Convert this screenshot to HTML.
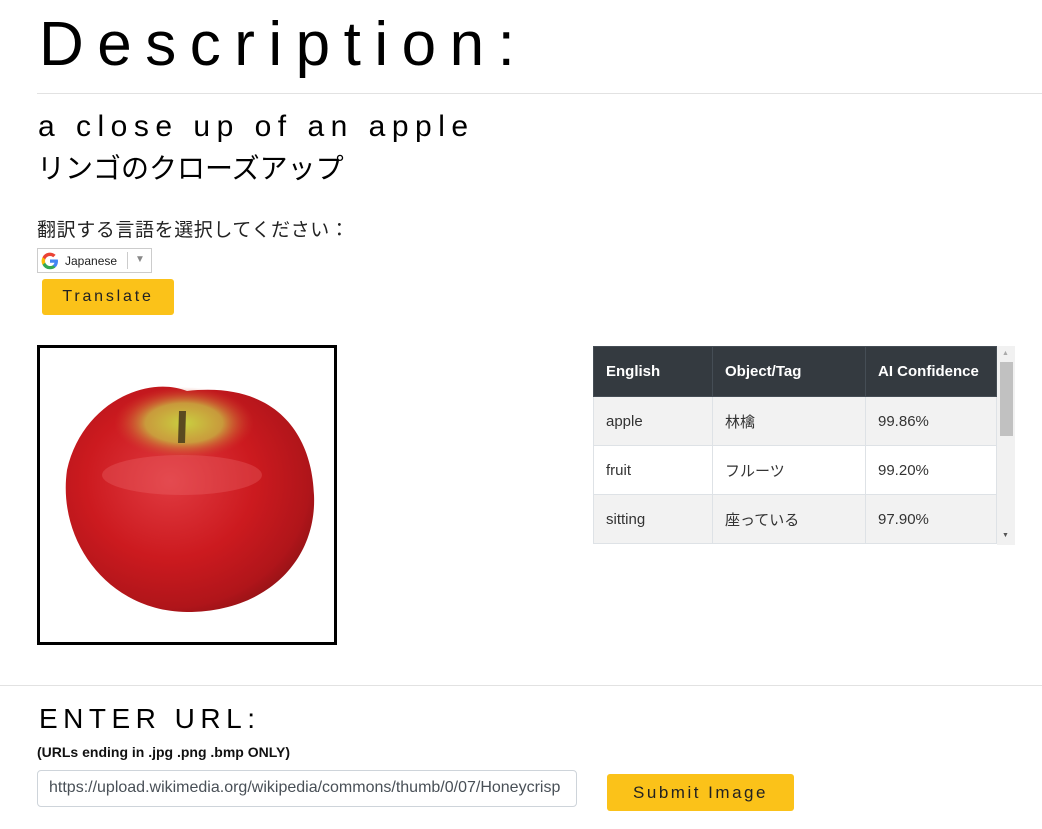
<!DOCTYPE html>
<html><head><meta charset="utf-8">
<style>
*{box-sizing:border-box;margin:0;padding:0}
body{width:1042px;height:829px;background:#fff;font-family:"Liberation Sans","Noto Sans CJK JP",sans-serif;color:#000;position:relative;overflow:hidden}
.abs{position:absolute}
h1{position:absolute;left:39px;top:6px;font-size:62px;font-weight:normal;letter-spacing:13.5px;line-height:78px;white-space:nowrap}
.hr{position:absolute;left:37px;right:0;height:1px;background:#e2e2e2}
.btn{position:absolute;background:#fbc219;border-radius:3px;color:#222;text-align:center;white-space:nowrap}
table{border-collapse:collapse;font-size:15px}
th{background:#343a40;color:#fff;text-align:left;font-weight:bold;height:50px;padding:0 12px;border:1px solid #454d55}
td{height:49px;padding:0 12px;border:1px solid #dee2e6;color:#333}
tr.g td{background:#f2f2f2}
</style></head><body>
<h1>Description:</h1>
<div class="hr" style="top:93px"></div>
<div class="abs" style="left:38px;top:110px;font-size:30px;letter-spacing:6.5px;white-space:nowrap">a close up of an apple</div>
<div class="abs" style="left:37px;top:147px;font-size:28px;white-space:nowrap">リンゴのクローズアップ</div>
<div class="abs" style="left:37px;top:215px;font-size:19px;letter-spacing:0.6px;color:#222;white-space:nowrap">翻訳する言語を選択してください：</div>
<div class="abs" style="left:37px;top:248px;width:115px;height:25px;border:1px solid #ccc;font-size:12px">
 <svg class="abs" style="left:3px;top:3px" width="18" height="18" viewBox="0 0 18 18">
  <path d="M17 9.2c0-.6-.1-1.2-.2-1.7H9v3.2h4.5a3.9 3.9 0 0 1-1.7 2.5v2.1h2.7c1.6-1.5 2.5-3.6 2.5-6.1z" fill="#4285F4"/>
  <path d="M9 17.3c2.3 0 4.2-.8 5.5-2l-2.7-2.1c-.7.5-1.700.8-2.8.8-2.2 0-4-1.5-4.7-3.4H1.5v2.2A8.3 8.3 0 0 0 9 17.3z" fill="#34A853"/>
  <path d="M4.3 10.6a5 5 0 0 1 0-3.2V5.2H1.5a8.3 8.3 0 0 0 0 7.6z" fill="#FBBC05"/>
  <path d="M9 4c1.2 0 2.3.4 3.2 1.3l2.4-2.4A8.3 8.3 0 0 0 1.5 5.2l2.8 2.2C5 5.5 6.8 4 9 4z" fill="#EA4335"/>
 </svg>
 <span class="abs" style="left:27px;top:5px;color:#222">Japanese</span>
 <span class="abs" style="left:89px;top:3px;width:1px;height:17px;background:#ccc"></span>
 <span class="abs" style="left:97px;top:5px;color:#888;font-size:10px">▼</span>
</div>
<div class="btn" style="left:42px;top:279px;width:132px;height:36px;line-height:36px;font-size:16px;letter-spacing:2.8px">Translate</div>

<div class="abs" style="left:37px;top:345px;width:300px;height:300px;border:3px solid #000;background:#fff">
 <svg width="294" height="294" viewBox="3 3 294 294">
  <defs>
   <radialGradient id="a" cx="0.42" cy="0.42" r="0.62">
    <stop offset="0" stop-color="#e03a40"/>
    <stop offset="0.55" stop-color="#cc1a1f"/>
    <stop offset="0.9" stop-color="#b0151a"/>
    <stop offset="1" stop-color="#9a1317"/>
   </radialGradient>
   <radialGradient id="y" cx="0.5" cy="0.5" r="0.5">
    <stop offset="0" stop-color="#c9d040"/>
    <stop offset="0.55" stop-color="#c8b040" stop-opacity="0.85"/>
    <stop offset="1" stop-color="#d04030" stop-opacity="0"/>
   </radialGradient>
  </defs>
  <path d="M150 46 C110 30 45 58 30 125 C20 195 70 266 150 267 C230 267 280 215 277 150 C275 90 240 36 150 46 Z" fill="url(#a)"/>
  <ellipse cx="147" cy="78" rx="70" ry="36" fill="url(#y)"/>
  <ellipse cx="145" cy="130" rx="80" ry="20" fill="#f07075" opacity="0.3"/>
  <path d="M141 98 L142 66 L149 66 L148 98 Z" fill="#5a4a20"/>
 </svg>
</div>

<div class="abs" style="left:593px;top:346px;width:422px;height:199px;overflow:hidden">
 <table style="width:404px">
  <tr><th style="width:119px">English</th><th style="width:153px">Object/Tag</th><th>AI Confidence</th></tr>
  <tr class="g"><td>apple</td><td>林檎</td><td>99.86%</td></tr>
  <tr><td>fruit</td><td>フルーツ</td><td>99.20%</td></tr>
  <tr class="g"><td>sitting</td><td>座っている</td><td>97.90%</td></tr>
 </table>
 <div class="abs" style="left:404px;top:0;width:18px;height:199px;background:#f1f1f1">
  <div class="abs" style="left:3px;top:16px;width:13px;height:74px;background:#c1c1c1"></div>
  <div class="abs" style="left:5px;top:4px;font-size:7px;color:#aaa">▲</div>
  <div class="abs" style="left:5px;top:186px;font-size:7px;color:#555">▼</div>
 </div>
</div>

<div class="hr" style="top:685px;left:0"></div>
<div class="abs" style="left:39px;top:703px;font-size:28px;letter-spacing:5.5px;white-space:nowrap">ENTER URL:</div>
<div class="abs" style="left:37px;top:744px;font-size:14px;font-weight:bold;color:#111">(URLs ending in .jpg .png .bmp ONLY)</div>
<div class="abs" style="left:37px;top:770px;width:540px;height:37px;border:1px solid #ced4da;border-radius:4px;font-size:16px;color:#495057;padding:8px 0 0 11px;white-space:nowrap;overflow:hidden">https://upload.wikimedia.org/wikipedia/commons/thumb/0/07/Honeycrisp</div>
<div class="btn" style="left:607px;top:774px;width:187px;height:37px;line-height:38px;font-size:17px;letter-spacing:2.5px">Submit Image</div>
</body></html>
